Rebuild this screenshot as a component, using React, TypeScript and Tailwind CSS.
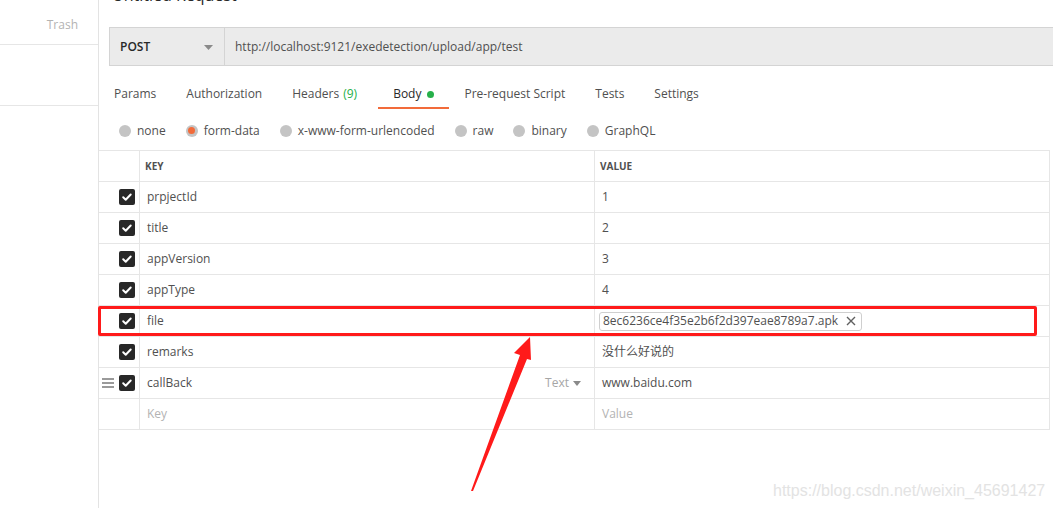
import React from 'react';

const font = { fontFamily: '"Open Sans", "Noto Sans CJK SC", sans-serif' };

const CheckBox: React.FC = () => (
  <span className="flex h-[16px] w-[16px] items-center justify-center rounded-[2px] bg-[#282828]">
    <svg width="12" height="12" viewBox="0 0 12 12" fill="none">
      <path d="M2.2 6.3l2.5 2.4 5-5.2" stroke="#fff" strokeWidth="2" strokeLinecap="round" strokeLinejoin="round" />
    </svg>
  </span>
);

const Radio: React.FC<{ label: string; active?: boolean }> = ({ label, active }) => (
  <div className="flex items-center gap-[6px]">
    <span className="flex h-[12px] w-[12px] items-center justify-center rounded-full bg-[#c4c4c4]">
      {active && <span className="h-[7px] w-[7px] rounded-full bg-[#f26b3a]" />}
    </span>
    <span className="text-[12px] text-[#505050]">{label}</span>
  </div>
);

const rows = [
  { key: 'prpjectId', value: '1' },
  { key: 'title', value: '2' },
  { key: 'appVersion', value: '3' },
  { key: 'appType', value: '4' },
  { key: 'file', value: '8ec6236ce4f35e2b6f2d397eae8789a7.apk', file: true },
  { key: 'remarks', value: '没什么好说的' },
  { key: 'callBack', value: 'www.baidu.com', hover: true },
];

const tabs = ['Params', 'Authorization', 'Headers', 'Body', 'Pre-request Script', 'Tests', 'Settings'];

export default function App() {
  return (
    <div className="relative flex h-[508px] w-[1053px] overflow-hidden bg-white" style={font}>
      {/* sidebar */}
      <div className="w-[99px] shrink-0 border-r border-[#e3e3e3]">
        <div className="flex h-[45px] items-center justify-end border-b border-[#e6e6e6] pr-[20px] pt-[6px] text-[12px] text-[#b3b3b3]">
          Trash
        </div>
        <div className="h-[61px] border-b border-[#e6e6e6]" />
      </div>

      {/* main */}
      <div className="flex min-w-0 flex-1 flex-col">
        <div className="h-[27px] overflow-hidden pl-[13px]">
          <div className="-mt-[15px] text-[16px] leading-[20px] text-[#282828]">Untitled Request</div>
        </div>

        <div className="ml-[10px] flex h-[39px] border-y border-[#d4d4d4] bg-[#ebebeb]">
          <div className="flex w-[116px] items-center justify-between border-x border-[#d4d4d4] pl-[10px] pr-[11px] pt-[1px]">
            <span className="text-[12px] font-semibold text-[#282828]">POST</span>
            <svg width="9" height="5" viewBox="0 0 9 5"><path d="M0 0h9L4.5 5z" fill="#8a8a8a" /></svg>
          </div>
          <div className="flex items-center pl-[10px] pt-[1px] text-[12px] text-[#505050]">
            http://localhost:9121/exedetection/upload/app/test
          </div>
        </div>

        <div className="flex h-[44px]">
          {tabs.map((t) => (
            <div key={t} className={`flex flex-col px-[15px] pt-[20px] ${t === 'Body' ? 'ml-[6px]' : ''}`}>
              <div className={`flex h-[16px] items-center text-[12px] ${t === 'Body' ? 'text-[#282828]' : 'text-[#505050]'}`}>
                {t}
                {t === 'Headers' && <span className="ml-[4px] text-[#26b04a]">(9)</span>}
                {t === 'Body' && <span className="ml-[6px] h-[7px] w-[7px] rounded-full bg-[#26b04a]" />}
              </div>
              <div className={`mx-[-15px] mt-[5px] h-[2px] ${t === 'Body' ? 'bg-[#f26b3a]' : ''}`} />
            </div>
          ))}
        </div>

        <div className="flex h-[40px] items-center gap-[20px] pl-[20px] pt-[1px]">
          <Radio label="none" />
          <Radio label="form-data" active />
          <Radio label="x-www-form-urlencoded" />
          <Radio label="raw" />
          <Radio label="binary" />
          <Radio label="GraphQL" />
        </div>

        <div className="relative w-[951px] border-t border-[#e6e6e6]">
          <div className="grid h-[31px] grid-cols-[41px_455px_455px] border-b border-[#e6e6e6]">
            <div className="border-r border-[#e6e6e6]" />
            <div className="flex items-center border-r border-[#e6e6e6] pl-[5px] text-[10px] font-bold text-[#505050]">KEY</div>
            <div className="flex items-center border-r border-[#e6e6e6] pl-[5px] text-[10px] font-bold text-[#505050]">VALUE</div>
          </div>
          {rows.map((r) => (
            <div key={r.key} className="grid h-[31px] grid-cols-[41px_455px_455px] border-b border-[#e6e6e6]">
              <div className="flex items-center justify-end gap-[5px] border-r border-[#e6e6e6] pr-[4px]">
                {r.hover && (
                  <svg width="12" height="10" viewBox="0 0 12 10">
                    <path d="M0 1h12M0 5h12M0 9h12" stroke="#7a7a7a" strokeWidth="1.6" />
                  </svg>
                )}
                <CheckBox />
              </div>
              <div className="flex items-center justify-between border-r border-[#e6e6e6] pl-[7px] pr-[13px] text-[12px] text-[#505050]">
                <span>{r.key}</span>
                {r.hover && (
                  <span className="flex items-center gap-[4px] text-[#a6a6a6]">
                    Text
                    <svg width="8" height="5" viewBox="0 0 8 5"><path d="M0 0h8L4 5z" fill="#8a8a8a" /></svg>
                  </span>
                )}
              </div>
              <div className="flex items-center border-r border-[#e6e6e6] pl-[7px] text-[12px] text-[#505050]">
                {r.file ? (
                  <span className="-ml-[3px] flex h-[19px] items-center gap-[8px] rounded-[3px] border border-[#cfcfcf] pl-[3px] pr-[5px]">
                    {r.value}
                    <svg width="10" height="10" viewBox="0 0 10 10">
                      <path d="M1 1l8 8M9 1l-8 8" stroke="#606060" strokeWidth="1.4" />
                    </svg>
                  </span>
                ) : (
                  r.value
                )}
              </div>
            </div>
          ))}
          <div className="grid h-[31px] grid-cols-[41px_455px_455px] border-b border-[#e6e6e6]">
            <div className="border-r border-[#e6e6e6]" />
            <div className="flex items-center border-r border-[#e6e6e6] pl-[7px] text-[12px] text-[#b3b3b3]">Key</div>
            <div className="flex items-center border-r border-[#e6e6e6] pl-[7px] text-[12px] text-[#b3b3b3]">Value</div>
          </div>

          {/* red annotation box */}
          <div className="pointer-events-none absolute left-[-1px] top-[155px] h-[30px] w-[939px] rounded-[2px] border-[3px] border-[#ff1a1a]" />
        </div>
      </div>

      {/* red arrow annotation */}
      <svg className="pointer-events-none absolute left-0 top-0" width="1053" height="508" viewBox="0 0 1053 508">
        <polygon points="530,337 514,353 520,355 471,491 473,491 527,359 531,360" fill="#ff1a1a" />
      </svg>

      {/* watermark */}
      <div
        className="pointer-events-none absolute left-[773px] top-[479px] text-[16px] text-[#e3e3e3]"
        style={{ fontFamily: '"Liberation Sans", Arial, sans-serif' }}
      >
        https://blog.csdn.net/weixin_45691427
      </div>
    </div>
  );
}
